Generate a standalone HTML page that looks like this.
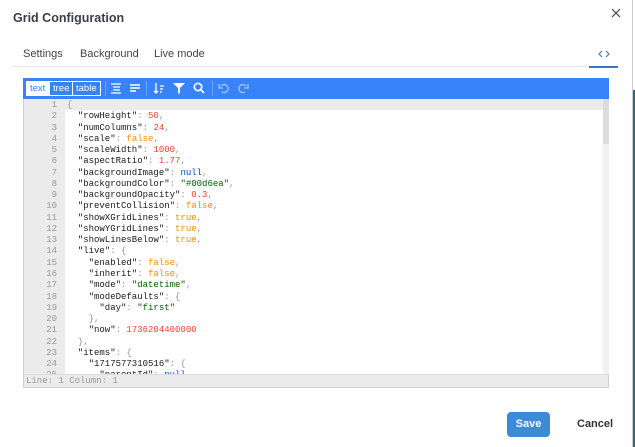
<!DOCTYPE html>
<html><head><style>
*{margin:0;padding:0;box-sizing:border-box}
body{width:635px;height:447px;background:#fff;position:relative;overflow:hidden;font-family:"Liberation Sans",sans-serif;color:#333}
.abs{position:absolute}
.title{left:13px;top:11px;font-size:12.5px;font-weight:bold;color:#3a3f4a}
.tab{top:48px;font-size:11px;color:#444}
.ed{left:23px;top:78px;width:586px;height:310px;border:1px solid #d0d0d0;background:#fff}
.tb{left:-1px;top:-1px;width:586px;height:21px;background:#3883fa}
.gut{left:0;top:20px;width:41px;height:276px;background:#ebebeb}
pre{font-family:"Liberation Mono",monospace;font-size:9px;line-height:11.27px}
.ln{left:0;top:21px;width:33px;text-align:right;color:#999}
.code{left:43px;top:21px;color:#1a1a1a}
.n{color:#ee422e}.b{color:#ff8c00}.s{color:#006000}.nl{color:#004ed0}.p{color:#999}
.st{left:0;top:295px;width:100%;height:13px;background:#ebebeb;border-top:1px solid #ddd;font-family:"Liberation Mono",monospace;font-size:9px;color:#999;padding-left:2px;line-height:12px}
.mode{top:3px;height:15px;font-size:9.5px;color:#fff;border:1px solid #fff;line-height:13px;padding:0 3px}
</style></head><body>
<div class="abs title">Grid Configuration</div>
<svg class="abs" style="left:611px;top:8px" width="10" height="10"><path d="M1 1L9 9M9 1L1 9" stroke="#444" stroke-width="1.2"/></svg>
<div class="abs tab" style="left:23px">Settings</div>
<div class="abs tab" style="left:80px">Background</div>
<div class="abs tab" style="left:154px">Live mode</div>
<svg class="abs" style="left:598px;top:50px" width="12" height="8"><path d="M4 1L1 4L4 7M8 1L11 4L8 7" stroke="#3a74c4" stroke-width="1.1" fill="none"/></svg>
<div class="abs" style="left:13px;top:66px;width:605px;height:1px;background:#e3e5e8"></div>
<div class="abs" style="left:589px;top:66px;width:29px;height:2px;background:#3a74c4"></div>
<div class="abs ed">
 <div class="abs tb">
  <div class="abs mode" style="left:3px;background:#fff;color:#3883fa">text</div>
  <div class="abs mode" style="left:26px">tree</div>
  <div class="abs mode" style="left:49px">table</div>
  <div class="abs" style="left:82px;top:3px;width:1px;height:15px;background:#6aa3fb"></div>
  <svg class="abs" style="left:87px;top:4px" width="12" height="12"><path d="M1 2H11M3 5H10M3 8H10M1 11H11" stroke="#fff" stroke-width="1.3"/></svg>
  <svg class="abs" style="left:106px;top:4px" width="12" height="12"><path d="M1 3H11M1 6H11M1 9H7" stroke="#fff" stroke-width="1.5"/></svg>
  <div class="abs" style="left:123px;top:3px;width:1px;height:15px;background:#6aa3fb"></div>
  <svg class="abs" style="left:130px;top:4px" width="12" height="12"><path d="M3 1V11M1 9L3 11L5 9M7 4H11M7 7H10M7 10H9" stroke="#fff" stroke-width="1.3" fill="none"/></svg>
  <svg class="abs" style="left:150px;top:5px" width="12" height="11"><path d="M0 0H12L7 5V10L5 11V5Z" fill="#fff"/></svg>
  <svg class="abs" style="left:170px;top:4px" width="12" height="12"><circle cx="5" cy="5" r="3.7" stroke="#fff" stroke-width="1.6" fill="none"/><path d="M8 8L11 11" stroke="#fff" stroke-width="1.8"/></svg>
  <div class="abs" style="left:189px;top:3px;width:1px;height:15px;background:#6aa3fb"></div>
  <svg class="abs" style="left:195px;top:4px" width="12" height="12"><path d="M3 4A4 4 0 1 1 4 10" stroke="#a9c9fd" stroke-width="1.3" fill="none"/><path d="M1 2V6H5" stroke="#a9c9fd" stroke-width="1.3" fill="none"/></svg>
  <svg class="abs" style="left:214px;top:4px" width="12" height="12"><path d="M9 4A4 4 0 1 0 8 10" stroke="#a9c9fd" stroke-width="1.3" fill="none"/><path d="M11 2V6H7" stroke="#a9c9fd" stroke-width="1.3" fill="none"/></svg>
 </div>
 <div class="abs gut"></div>
 <div class="abs" style="left:41px;top:20px;width:538px;height:11px;background:#ebebeb"></div>
 <div class="abs" style="left:579px;top:20px;width:6px;height:275px;background:#f1f1f1"></div>
 <div class="abs" style="left:579px;top:20px;width:6px;height:45px;background:#dcdcdc"></div>
<pre class="abs ln">1
2
3
4
5
6
7
8
9
10
11
12
13
14
15
16
17
18
19
20
21
22
23
24
25</pre>
<pre class="abs code"><span class="p">{</span>
  "rowHeight"<span class="p">:</span> <span class="n">50</span><span class="p">,</span>
  "numColumns"<span class="p">:</span> <span class="n">24</span><span class="p">,</span>
  "scale"<span class="p">:</span> <span class="b">false</span><span class="p">,</span>
  "scaleWidth"<span class="p">:</span> <span class="n">1000</span><span class="p">,</span>
  "aspectRatio"<span class="p">:</span> <span class="n">1.77</span><span class="p">,</span>
  "backgroundImage"<span class="p">:</span> <span class="nl">null</span><span class="p">,</span>
  "backgroundColor"<span class="p">:</span> <span class="s">"#00d6ea"</span><span class="p">,</span>
  "backgroundOpacity"<span class="p">:</span> <span class="n">0.3</span><span class="p">,</span>
  "preventCollision"<span class="p">:</span> <span class="b">false</span><span class="p">,</span>
  "showXGridLines"<span class="p">:</span> <span class="b">true</span><span class="p">,</span>
  "showYGridLines"<span class="p">:</span> <span class="b">true</span><span class="p">,</span>
  "showLinesBelow"<span class="p">:</span> <span class="b">true</span><span class="p">,</span>
  "live"<span class="p">: {</span>
    "enabled"<span class="p">:</span> <span class="b">false</span><span class="p">,</span>
    "inherit"<span class="p">:</span> <span class="b">false</span><span class="p">,</span>
    "mode"<span class="p">:</span> <span class="s">"datetime"</span><span class="p">,</span>
    "modeDefaults"<span class="p">: {</span>
      "day"<span class="p">:</span> <span class="s">"first"</span>
    <span class="p">},</span>
    "now"<span class="p">:</span> <span class="n">1736204400000</span>
  <span class="p">},</span>
  "items"<span class="p">: {</span>
    "1717577310516"<span class="p">: {</span>
      "parentId"<span class="p">:</span> <span class="nl">null</span></pre>
 <div class="abs st">Line: 1  Column: 1</div>
</div>
<div class="abs" style="left:507px;top:412px;width:43px;height:25px;background:#3d8ad8;border-radius:4px;color:#fff;font-size:11px;font-weight:bold;text-align:center;line-height:25px">Save</div>
<div class="abs" style="left:577px;top:418px;font-size:11px;font-weight:bold;color:#333">Cancel</div>
<div class="abs" style="left:632px;top:0;width:1px;height:447px;background:#ccc"></div>
<div class="abs" style="left:633px;top:90px;width:2px;height:357px;background:#2a6f78"></div>
</body></html>
